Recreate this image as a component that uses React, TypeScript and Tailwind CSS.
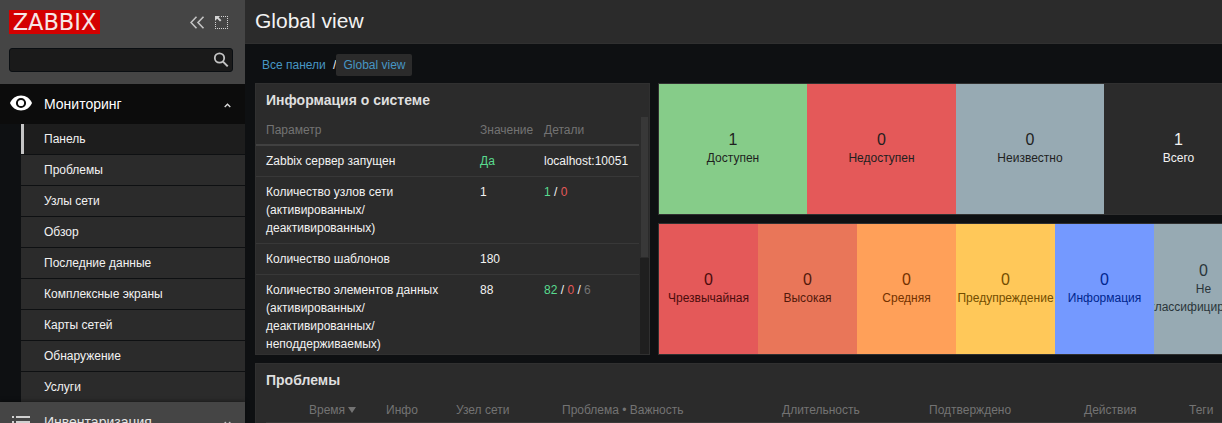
import React from "react";

const menu = ["Панель", "Проблемы", "Узлы сети", "Обзор", "Последние данные", "Комплексные экраны", "Карты сетей", "Обнаружение", "Услуги"];

const Ok = ({ children }: { children: React.ReactNode }) => <span className="text-[#59db8f]">{children}</span>;
const Bad = ({ children }: { children: React.ReactNode }) => <span className="text-[#e45959]">{children}</span>;

const systemRows: { name: string[]; value: React.ReactNode; details: React.ReactNode }[] = [
  { name: ["Zabbix сервер запущен"], value: <Ok>Да</Ok>, details: "localhost:10051" },
  {
    name: ["Количество узлов сети", "(активированных/", "деактивированных)"],
    value: "1",
    details: <><Ok>1</Ok> / <Bad>0</Bad></>,
  },
  { name: ["Количество шаблонов"], value: "180", details: "" },
  {
    name: ["Количество элементов данных", "(активированных/", "деактивированных/", "неподдерживаемых)"],
    value: "88",
    details: <><Ok>82</Ok> / <Bad>0</Bad> / <span className="text-[#737373]">6</span></>,
  },
];

const hosts = [
  { count: 1, label: ["Доступен"], style: "bg-[#86cc89] text-[#1f1f1f]" },
  { count: 0, label: ["Недоступен"], style: "bg-[#e45959] text-[#1f1f1f]" },
  { count: 0, label: ["Неизвестно"], style: "bg-[#97aab3] text-[#1f1f1f]" },
  { count: 1, label: ["Всего"], style: "bg-[#2b2b2b] text-[#f2f2f2]" },
];

const severities = [
  { count: 0, label: ["Чрезвычайная"], style: "bg-[#e45959] text-[#4b0c0c]" },
  { count: 0, label: ["Высокая"], style: "bg-[#e97659] text-[#52190b]" },
  { count: 0, label: ["Средняя"], style: "bg-[#ffa059] text-[#733100]" },
  { count: 0, label: ["Предупреждение"], style: "bg-[#ffc859] text-[#734d00]" },
  { count: 0, label: ["Информация"], style: "bg-[#7499ff] text-[#00268e]" },
  { count: 0, label: ["Не", "классифицировано"], style: "bg-[#97aab3] text-[#2a353a]" },
];

type TileData = { count: number; label: string[]; style: string };

function Tiles({ items, columns }: { items: TileData[]; columns: string }) {
  return (
    <section className="h-[132px] w-[596px] border border-[#303030] bg-[#2b2b2b]">
      <div className={`grid h-full ${columns}`}>
        {items.map((t) => (
          <div key={t.label.join()} className={`flex min-w-0 flex-col items-center justify-center overflow-hidden whitespace-nowrap leading-[18px] ${t.style}`}>
            <span className="text-[16px]">{t.count}</span>
            {t.label.map((l) => <span key={l} className={l.length > 15 ? "mr-[1px]" : ""}>{l}</span>)}
          </div>
        ))}
      </div>
    </section>
  );
}

function Sidebar() {
  return (
    <aside className="flex h-full w-[245px] shrink-0 flex-col">
      <div className="h-[84px] shrink-0 bg-[#454545] pl-[9px] pt-[10px]">
        <div className="flex h-6 items-center">
          <div className="flex h-6 w-[91px] items-center justify-center bg-[#d40000] font-['DejaVu_Sans',sans-serif] text-[22.5px] leading-6 text-[#f6e6e6] antialiased">ZABBIX</div>
          <svg className="ml-[90px]" width="15" height="13" viewBox="0 0 15 13" fill="none" stroke="#c4c4c4" strokeWidth="1.6">
            <path d="M6.5 .7 1 6.5l5.5 5.8M13.5 .7 8 6.5l5.5 5.8" />
          </svg>
          <svg className="ml-[10px]" width="13" height="13" viewBox="0 0 13 13" fill="none" stroke="#d4d4d4">
            <path d="M6 .5h7M12.5 2v11M0 12.5h12M.5 6v7" strokeDasharray="1 1" />
            <path d="M0 0h5L3.700 1.500 6.400 4.200 5 5.500 2.200 2.800 0 5z" fill="#d4d4d4" stroke="none" />
          </svg>
        </div>
        <div className="mt-[14px] flex h-6 w-56 items-center justify-end rounded-[3px] border border-[#0a0e12] bg-[#1a1a1a] pr-[3px]">
          <svg width="16" height="16" viewBox="0 0 16 16" fill="none" stroke="#c4c4c4">
            <circle cx="6.5" cy="6" r="4.700" strokeWidth="1.800" />
            <path d="m10 9.600 4.700 4.800" strokeWidth="2" />
          </svg>
        </div>
      </div>
      <div className="flex h-10 shrink-0 items-center bg-[#0c0c0c] pl-[10px] text-[14px] text-white">
        <svg className="-mt-0.5" width="22" height="16" viewBox="0 0 22 16">
          <path d="M11 .5C6 .5 1.800 3.500 0 8c1.800 4.500 6 7.500 11 7.500S20.200 12.500 22 8C20.200 3.500 16 .5 11 .5z" fill="#fff" />
          <circle cx="11" cy="8" r="4.100" fill="none" stroke="#0c0c0c" strokeWidth="2" />
        </svg>
        <span className="ml-3 flex-1">Мониторинг</span>
        <svg className="mr-[14px] mt-[3px]" width="7" height="5" viewBox="0 0 7 5" fill="none" stroke="#ddd" strokeWidth="1.3"><path d="m.7 4 2.800-2.800L6.300 4" /></svg>
      </div>
      <nav className="ml-[21px] h-[278px] shrink-0 overflow-hidden">
        {menu.map((m, i) => (
          <div key={m} className={`flex h-[31px] items-center border-b border-[#0e1012] text-[#f2f2f2] ${i === 0 ? "bg-[#1d1d1d]" : "bg-[#2b2b2b] pl-[23px]"}`}>
            {i === 0 && <span className="mr-5 h-full w-[3px] bg-[#c4c4c4]" />}
            {m}
          </div>
        ))}
      </nav>
      <div className="flex h-10 shrink-0 items-center bg-[#454545] pl-[12px] text-[14px] text-[#e4e4e4] shadow-[0_-1px_4px_rgba(0,0,0,0.4)]">
        <svg width="18" height="14" viewBox="0 0 18 14" fill="#d0d0d0">
          <path d="M0 1h2v2H0zM4 1h14v2H4zM0 6h2v2H0zM4 6h14v2H4zM0 11h2v2H0zM4 11h14v2H4z" />
        </svg>
        <span className="ml-[14px] flex-1">Инвентаризация</span>
        <svg className="mr-[14px] mt-0.5" width="7" height="5" viewBox="0 0 7 5" fill="none" stroke="#c4c4c4" strokeWidth="1.300"><path d="m.7 1 2.800 2.800L6.300 1" /></svg>
      </div>
    </aside>
  );
}

function SystemInfo() {
  return (
    <section className="flex h-[272px] w-[395px] shrink-0 flex-col border border-[#303030] bg-[#2b2b2b]">
      <h4 className="h-[33px] shrink-0 pl-[10px] text-[14px] font-bold leading-[33px] text-[#dfdfdf]">Информация о системе</h4>
      <div className="flex min-h-0 flex-1">
        <div className="w-[383px] overflow-hidden leading-[18px]">
          <div className="grid h-[29px] grid-cols-[214px_64px_1fr] border-b-2 border-[#414141] pl-[10px] pt-1 text-[#737373]">
            <span>Параметр</span><span>Значение</span><span>Детали</span>
          </div>
          {systemRows.map((r) => (
            <div key={r.name[0]} className="grid grid-cols-[214px_64px_1fr] border-b border-[#383838] py-[6px] pl-[10px]">
              <div>{r.name.map((n) => <div key={n}>{n}</div>)}</div>
              <span>{r.value}</span>
              <span>{r.details}</span>
            </div>
          ))}
        </div>
        <div className="ml-px w-[9px] bg-[#1f1f1f]">
          <div className="h-[141px] border-x border-b border-[#2b2b2b] bg-[#383838]" />
        </div>
      </div>
    </section>
  );
}

export default function App() {
  return (
    <div className="flex h-[423px] w-[1222px] overflow-hidden bg-[#0e1012] font-['Liberation_Sans',Arial,sans-serif] text-[12px] text-[#f2f2f2]">
      <Sidebar />
      <main className="flex min-w-0 flex-1 flex-col">
        <header className="h-[44px] shrink-0 border-b border-[#303030] bg-[#2b2b2b] pl-[10px]">
          <h1 className="text-[21px] leading-[42px]">Global view</h1>
        </header>
        <div className="flex h-[39px] shrink-0 items-start pl-[17px] pt-[10px] leading-[22px] text-[#4796c4]">
          <span className="w-[71px]">Все панели</span>
          <span className="w-[3px] text-[#f2f2f2]">/</span>
          <span className="h-[22px] w-[76px] rounded-[2px] bg-[#2b2b2b] pl-[7.5px]">Global view</span>
        </div>
        <div className="flex shrink-0 gap-2 pl-[10px]">
          <SystemInfo />
          <div className="flex shrink-0 flex-col gap-2">
            <Tiles items={hosts} columns="grid-cols-[148px_149px_148px_149px]" />
            <Tiles items={severities} columns="grid-cols-6" />
          </div>
        </div>
        <section className="ml-[10px] mt-2 h-[80px] w-[999px] shrink-0 border border-[#303030] bg-[#2b2b2b] pl-[10px]">
          <h4 className="h-[33px] text-[14px] font-bold leading-[33px] text-[#dfdfdf]">Проблемы</h4>
          <div className="grid h-[27px] grid-cols-[77px_70px_106px_220px_147px_155px_105px_1fr] items-start whitespace-nowrap border-b-2 border-[#383838] pl-[43px] pt-1 leading-[18px] text-[#737373]">
            <span className="flex items-center gap-[3px]">Время
              <svg width="8" height="6" viewBox="0 0 8 6"><path d="M0 0h8L4 6z" fill="#737373" /></svg>
            </span>
            <span>Инфо</span><span>Узел сети</span><span>Проблема • Важность</span><span>Длительность</span><span>Подтверждено</span><span>Действия</span><span>Теги</span>
          </div>
        </section>
      </main>
    </div>
  );
}
